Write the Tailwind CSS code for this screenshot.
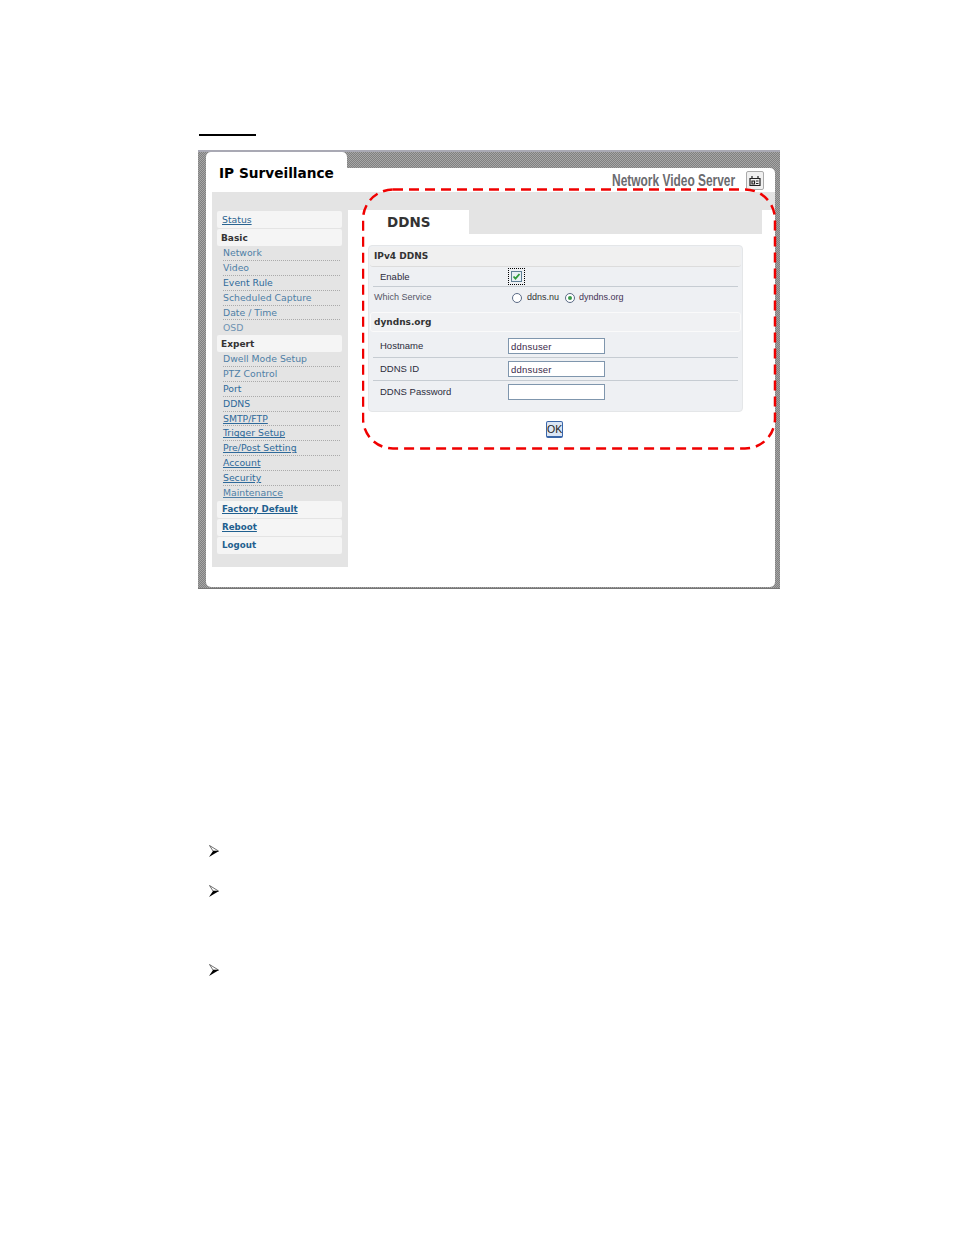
<!DOCTYPE html>
<html lang="en">
  <head>
    <meta charset="UTF-8" />
    <title>DDNS</title>
    <script src="https://cdn.jsdelivr.net/npm/@tailwindcss/browser@4"></script>
  </head>
  <body class="bg-white">
    <div class="w-[954px] h-[1235px] pt-[134px] pl-[198px] font-['Liberation_Sans',sans-serif]">
      <div class="ml-px w-[57px] h-[2px] bg-black"></div>

      <!-- screenshot frame -->
      <div class="relative mt-[14px] w-[582px] h-[439px] border-t-2 border-[#a9a9b4] border-b border-b-[#777] bg-[repeating-conic-gradient(#808080_0_25%,#a6a6a6_0_50%)] bg-[length:2px_2px] pl-[8px] pr-[5px] pt-0">
        <!-- header -->
        <div class="flex h-[40px]">
          <div class="w-[141px] h-[40px] bg-white rounded-t-[5px] pl-[13px] pt-[13px] font-['DejaVu_Sans',sans-serif] font-bold text-[13.7px] leading-[16px] text-black whitespace-nowrap">IP Surveillance</div>
          <div class="flex-1 mt-[16px] bg-white rounded-tr-[5px] flex justify-end items-start pr-[11px] pt-[3px]">
            <span class="text-[16px] leading-[18px] font-bold text-[#6b6b6f] scale-x-[.745] origin-right whitespace-nowrap mr-[11px] mt-[1px]">Network Video Server</span>
            <div class="w-[18px] h-[19px] rounded-[2px] border border-[#aaa] bg-[#f0f0f0] flex items-center justify-center">
              <svg width="14" height="12" viewBox="0 0 14 12" fill="none" stroke="#222" stroke-width="1.200">
                <path d="M2 3.500h10v7h-10z" />
                <path d="M4 3V1M10 3V1" />
                <path d="M4 6h2.500v3h-2.500zM8 6h2.500M8 8.500h2.500" />
              </svg>
            </div>
          </div>
        </div>

        <!-- body -->
        <div class="bg-white h-[395px] rounded-b-[5px] pl-[6px] flex items-start">
          <!-- sidebar -->
          <div class="w-[136px] h-[375px] bg-[#e4e4e4] pt-[19px] pl-[5px] font-['DejaVu_Sans',sans-serif] text-[9.300px]">
            <div class="w-[125px] flex flex-col">
              <a class="h-[17px] mb-px rounded-[2px] bg-[#f5f5f5] pl-[5px] leading-[18px] text-[#2a6490] underline">Status</a>
              <div class="h-[17px] rounded-[2px] bg-[#f5f5f5] pl-[4px] leading-[18px] text-[9px] font-bold text-[#333]">Basic</div>

              <div class="h-[89px]">
                <div class="h-[14.900px] ml-[6px] mr-[2px] leading-[14px] text-[#4f7fa6] border-b border-dotted border-[#aaa]">Network</div>
                <div class="h-[14.900px] ml-[6px] mr-[2px] leading-[14px] text-[#4f7fa6] border-b border-dotted border-[#aaa]">Video</div>
                <div class="h-[14.900px] ml-[6px] mr-[2px] leading-[14px] text-[#2f6a9a] border-b border-dotted border-[#aaa]">Event Rule</div>
                <div class="h-[14.900px] ml-[6px] mr-[2px] leading-[14px] text-[#4f7fa6] border-b border-dotted border-[#aaa]">Scheduled Capture</div>
                <div class="h-[14.900px] ml-[6px] mr-[2px] leading-[14px] text-[#4f7fa6] border-b border-dotted border-[#aaa]">Date / Time</div>
                <div class="h-[14px] ml-[6px] mr-[2px] leading-[15px] text-[#6f93b3]">OSD</div>
              </div>

              <div class="h-[17px] rounded-[2px] bg-[#f5f5f5] pl-[4px] leading-[18px] text-[9px] font-bold text-[#333]">Expert</div>
              <div class="h-[149px]">
                <div class="h-[14.900px] ml-[6px] mr-[2px] leading-[14px] text-[#4f7fa6] border-b border-dotted border-[#aaa]">Dwell Mode Setup</div>
                <div class="h-[14.900px] ml-[6px] mr-[2px] leading-[14px] text-[#4f7fa6] border-b border-dotted border-[#aaa]">PTZ Control</div>
                <div class="h-[14.900px] ml-[6px] mr-[2px] leading-[14px] text-[#2f6a9a] border-b border-dotted border-[#aaa]">Port</div>
                <div class="h-[14.900px] ml-[6px] mr-[2px] leading-[14px] text-[#2f6a9a] border-b border-dotted border-[#aaa]">DDNS</div>
                <div class="h-[14.900px] ml-[6px] mr-[2px] leading-[14px] text-[#2f6a9a] underline border-b border-dotted border-[#aaa]">SMTP/FTP</div>
                <div class="h-[14.900px] ml-[6px] mr-[2px] leading-[14px] text-[#2f6a9a] underline border-b border-dotted border-[#aaa]">Trigger Setup</div>
                <div class="h-[14.900px] ml-[6px] mr-[2px] leading-[14px] text-[#2f6a9a] underline border-b border-dotted border-[#aaa]">Pre/Post Setting</div>
                <div class="h-[14.900px] ml-[6px] mr-[2px] leading-[14px] text-[#2f6a9a] underline border-b border-dotted border-[#aaa]">Account</div>
                <div class="h-[14.900px] ml-[6px] mr-[2px] leading-[14px] text-[#2f6a9a] underline border-b border-dotted border-[#aaa]">Security</div>
                <div class="h-[14.900px] ml-[6px] mr-[2px] leading-[14px] text-[#4f7fa6] underline">Maintenance</div>
              </div>

              <a class="h-[17px] mb-px rounded-[2px] bg-[#f5f5f5] pl-[5px] leading-[17px] text-[8.700px] font-bold text-[#1f5f8f] underline">Factory Default</a>
              <a class="h-[17px] mb-px rounded-[2px] bg-[#f5f5f5] pl-[5px] leading-[17px] text-[8.700px] font-bold text-[#1f5f8f] underline">Reboot</a>
              <a class="h-[17px] rounded-[2px] bg-[#f5f5f5] pl-[5px] leading-[17px] text-[8.700px] font-bold text-[#1f5f8f]">Logout</a>
            </div>
          </div>

          <!-- content -->
          <div class="w-[427px]">
            <div class="h-[18px] bg-[#e4e4e4]"></div>
            <div class="w-[414px] h-[24px] bg-[#e4e4e4] flex">
              <div class="w-[121px] h-[24px] bg-white pl-[39px] font-['DejaVu_Sans',sans-serif] font-bold text-[13.500px] leading-[25px] text-[#333]">DDNS</div>
            </div>

            <div class="ml-[20px] mt-[11px] w-[375px] h-[167px] bg-[#eef0f3] rounded-[4px] border border-[#e4e6e8] text-[9.500px] text-[#2c2c3c]">
              <div class="h-[20px] mx-px mt-px bg-[#f0f0f0] rounded-[3px] border-b border-[#dcdcdc] pl-[4px] font-['DejaVu_Sans',sans-serif] font-bold text-[9px] leading-[18px] text-[#333]">IPv4 DDNS</div>
              <div class="mx-[4px] h-[20px] flex items-center border-b border-[#c6ccd2] pl-[7px]">
                <span class="w-[128px] pt-px">Enable</span>
                <span class="w-[17px] h-[17px] border border-dotted border-black flex items-center justify-center">
                  <span class="w-[11px] h-[11px] border border-[#5f7f95] bg-[#e8f0f4] flex items-center justify-center">
                    <svg width="9" height="9" viewBox="0 0 9 9" fill="none" stroke="#2f9a3a" stroke-width="1.800"><path d="M1.500 4.500l2 2.200 4-4.700" /></svg>
                  </span>
                </span>
              </div>
              <div class="ml-[5px] mr-[4px] h-[21px] flex items-center text-[9px]">
                <span class="w-[138px] text-[#555566]">Which Service</span>
                <span class="w-[10px] h-[10px] rounded-full border border-[#5a6a85] bg-white mr-[5px]"></span>
                <span class="w-[38px] text-[#333]">ddns.nu</span>
                <span class="w-[10px] h-[10px] rounded-full border border-[#5a6a85] bg-white mr-[4px] flex items-center justify-center"><span class="w-[4px] h-[4px] rounded-full bg-[#3a9a4a]"></span></span>
                <span class="text-[#443355]">dyndns.org</span>
              </div>
              <div class="h-[20px] mt-[4px] mx-px bg-[#f0f1f3] rounded-[3px] border border-[#fafafa] pl-[3px] font-['DejaVu_Sans',sans-serif] font-bold text-[9px] leading-[19px] text-[#333]">dyndns.org</div>

              <div class="mx-[4px] mt-[3px] h-[23px] flex items-center border-b border-[#c6ccd2] pl-[7px]">
                <span class="w-[128px]">Hostname</span>
                <input value="ddnsuser" class="w-[97px] h-[16px] border border-[#7f96ad] bg-white pl-[2px] text-[9.500px] text-[#3a2a4a] tracking-[.2px]" />
              </div>
              <div class="mx-[4px] h-[23px] flex items-center border-b border-[#c6ccd2] pl-[7px]">
                <span class="w-[128px]">DDNS ID</span>
                <input value="ddnsuser" class="w-[97px] h-[16px] border border-[#7f96ad] bg-white pl-[2px] text-[9.500px] text-[#3a2a4a] tracking-[.2px]" />
              </div>
              <div class="mx-[4px] h-[22px] flex items-center pl-[7px]">
                <span class="w-[128px] pt-px">DDNS Password</span>
                <input class="w-[97px] h-[16px] border border-[#7f96ad] bg-white" />
              </div>
            </div>

            <div class="ml-[198px] mt-[9px] w-[17px] h-[17px] rounded-[2px] border border-b-2 border-[#3a66a8] bg-[#dbe6f5] text-[10.500px] leading-[14px] text-center text-[#222]">OK</div>
          </div>
        </div>

        <!-- red dashed callout over the screenshot -->
        <svg class="absolute left-[164px] top-[36px]" width="416" height="264" viewBox="0 0 416 264" fill="none">
          <rect x="1" y="1.500" width="412" height="259" rx="30" stroke="#f00000" stroke-width="2.500" stroke-dasharray="10 6" />
        </svg>
      </div>

      <!-- bullets of the manual page -->
      <div class="mt-[256px] pl-[11px] flex flex-col">
        <svg width="10" height="12" viewBox="0 0 10 12"><path d="M.500.500L9.500 6H4z" fill="#fff" stroke="#333" stroke-width=".7" /><path d="M0 12L10 6H4z" fill="#000" /></svg>
        <svg class="mt-[28px]" width="10" height="12" viewBox="0 0 10 12"><path d="M.500.500L9.500 6H4z" fill="#fff" stroke="#333" stroke-width=".7" /><path d="M0 12L10 6H4z" fill="#000" /></svg>
        <svg class="mt-[67px]" width="10" height="12" viewBox="0 0 10 12"><path d="M.500.500L9.500 6H4z" fill="#fff" stroke="#333" stroke-width=".7" /><path d="M0 12L10 6H4z" fill="#000" /></svg>
      </div>
    </div>
  </body>
</html>
